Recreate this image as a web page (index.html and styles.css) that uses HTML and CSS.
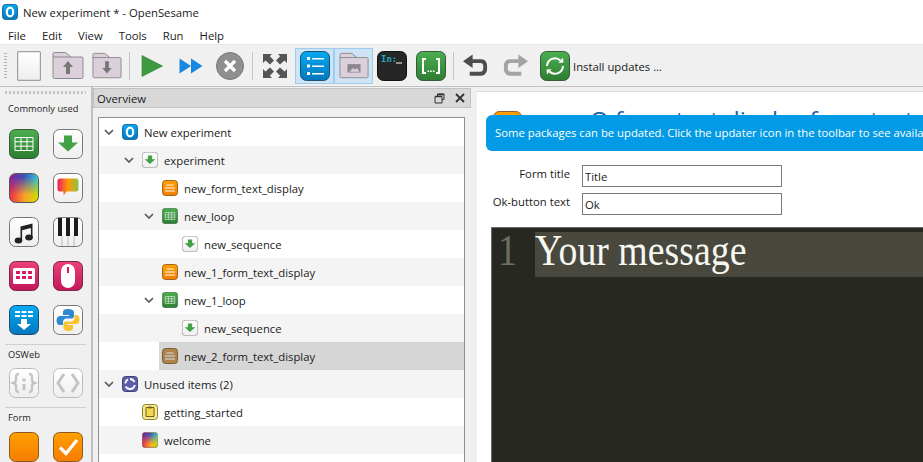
FILE: index.html
```html
<!DOCTYPE html>
<html lang="en">
<head>
<meta charset="utf-8">
<title>New experiment * - OpenSesame</title>
<link rel="stylesheet" href="styles.css">
</head>
<body>
<svg class="defs" width="0" height="0" aria-hidden="true">
  <defs>
    <linearGradient id="green" x1="0" y1="0" x2="0" y2="1"><stop offset="0" stop-color="#4caf50"/><stop offset="1" stop-color="#2e7d32"/></linearGradient>
    <linearGradient id="blue" x1="0" y1="0" x2="0" y2="1"><stop offset="0" stop-color="#03a9f4"/><stop offset="1" stop-color="#0277bd"/></linearGradient>
    <linearGradient id="orange" x1="0" y1="0" x2="0" y2="1"><stop offset="0" stop-color="#ffa000"/><stop offset="1" stop-color="#f57c00"/></linearGradient>
    <linearGradient id="pink" x1="0" y1="0" x2="0" y2="1"><stop offset="0" stop-color="#ec407a"/><stop offset="1" stop-color="#c2185b"/></linearGradient>
    <linearGradient id="paper" x1="0" y1="0" x2="0" y2="1"><stop offset="0" stop-color="#ffffff"/><stop offset="1" stop-color="#eeeeee"/></linearGradient>
    <linearGradient id="rb-top" x1="0" y1="0" x2="1" y2="0"><stop offset="0" stop-color="#7b1fa2"/><stop offset=".5" stop-color="#3f51b5"/><stop offset="1" stop-color="#29c6e6"/></linearGradient>
    <linearGradient id="rb-bot" x1="0" y1="0" x2="1" y2="0"><stop offset="0" stop-color="#ef2b45"/><stop offset=".55" stop-color="#f9a825"/><stop offset="1" stop-color="#c6e000"/></linearGradient>
    <linearGradient id="rb-fade" x1="0" y1="0" x2="0" y2="1"><stop offset=".1" stop-color="#fff"/><stop offset=".75" stop-color="#000"/></linearGradient>
    <mask id="rb-mask" maskContentUnits="objectBoundingBox"><rect width="1" height="1" fill="url(#rb-fade)"/></mask>
    <linearGradient id="rb3" x1="0" y1="0" x2="1" y2="0"><stop offset="0" stop-color="#e91e63"/><stop offset=".5" stop-color="#ff9800"/><stop offset="1" stop-color="#8bc34a"/></linearGradient>
    <symbol id="i-loop" viewBox="0 0 30 30"><rect x=".5" y=".5" width="29" height="29" rx="6" fill="url(#green)" stroke="#33593a"/><path d="M6 8.500h18v13H6zM6 12.800h18M6 17.200h18M12 8.500v13M18 8.500v13" fill="none" stroke="#fff" stroke-width="1"/></symbol>
    <symbol id="i-seq" viewBox="0 0 30 30"><rect x=".5" y=".5" width="29" height="29" rx="6" fill="url(#paper)" stroke="#777"/><path d="M11 6.500h8v7h6l-10 9-10-9h6z" fill="#43a047"/></symbol>
    <symbol id="i-rainbow" viewBox="0 0 30 30"><rect x=".5" y=".5" width="29" height="29" rx="6" fill="url(#rb-bot)" stroke="#555"/><rect x="1" y="1" width="28" height="28" rx="6" fill="url(#rb-top)" mask="url(#rb-mask)"/></symbol>
    <symbol id="i-feedback" viewBox="0 0 30 30"><rect x=".5" y=".5" width="29" height="29" rx="6" fill="url(#paper)" stroke="#777"/><path d="M7 5.500h16a2.500 2.500 0 0 1 2.500 2.500v8a2.500 2.500 0 0 1-2.500 2.500h-9.500l-3 4v-4H7A2.500 2.500 0 0 1 4.500 16V8A2.500 2.500 0 0 1 7 5.500z" fill="url(#rb3)"/></symbol>
    <symbol id="i-music" viewBox="0 0 30 30"><rect x=".5" y=".5" width="29" height="29" rx="6" fill="url(#paper)" stroke="#777"/><path d="M11.500 9.500l12-3v15h-1.600V11l-8.800 2.200V24h-1.600z" fill="#222"/><ellipse cx="9.500" cy="23.500" rx="3.800" ry="3" fill="#222"/><ellipse cx="20" cy="20.500" rx="3.800" ry="3" fill="#222"/></symbol>
    <symbol id="i-piano" viewBox="0 0 30 30"><rect x=".5" y=".5" width="29" height="29" rx="6" fill="url(#paper)" stroke="#777"/><path d="M9 19v10M15 19v10M21 19v10" stroke="#bbb"/><path d="M5 1h4v18H5zM13 1h4v18h-4zM21 1h4v18h-4z" fill="#1c1c1c"/></symbol>
    <symbol id="i-keyboard" viewBox="0 0 30 30"><rect x=".5" y=".5" width="29" height="29" rx="6" fill="url(#pink)" stroke="#7a2945"/><path d="M4 8.500a1.500 1.500 0 0 1 1.500-1.500h19a1.500 1.500 0 0 1 1.500 1.500v13a1.500 1.500 0 0 1-1.500 1.500h-19A1.500 1.500 0 0 1 4 21.500z" fill="#fff"/><path d="M7 10h4v3H7zM13 10h4v3h-4zM19 10h4v3h-4zM7 15h4v3H7zM13 15h4v3h-4zM19 15h4v3h-4z" fill="#d81b60"/></symbol>
    <symbol id="i-mouse" viewBox="0 0 30 30"><rect x=".5" y=".5" width="29" height="29" rx="6" fill="url(#pink)" stroke="#7a2945"/><rect x="8" y="3" width="14" height="24" rx="7" fill="#fff"/><path d="M15 6v6" stroke="#d81b60" stroke-width="2"/></symbol>
    <symbol id="i-logger" viewBox="0 0 30 30"><rect x=".5" y=".5" width="29" height="29" rx="6" fill="url(#blue)" stroke="#1d4f6e"/><path d="M6 6h5v2H6zM12.500 6h5v2h-5zM19 6h5v2h-5zM6 10h5v2H6zM12.500 10h5v2h-5zM19 10h5v2h-5zM12 14h6v5h4l-7 6-7-6h4z" fill="#fff"/></symbol>
    <symbol id="i-python" viewBox="0 0 30 30"><rect x=".5" y=".5" width="29" height="29" rx="6" fill="url(#paper)" stroke="#777"/><path d="M15 4c-4 0-5 1.500-5 3.500V10h6v1H7c-2 0-3.500 1.500-3.500 4.500S5 20 7 20h3v-3c0-2 1.500-3.500 3.500-3.500h5c1.500 0 2.500-1 2.500-2.500V7.500C21 5.500 19 4 15 4z" fill="#2f89d0"/><path d="M15 26c4 0 5-1.500 5-3.500V20h-6v-1h9c2 0 3.500-1.500 3.500-4.500S25 10 23 10h-1.500v3c0 2-1.500 3.500-3.500 3.500h-5c-1.500 0-2.500 1-2.500 2.500v3.500c0 2 1.500 3.500 4.500 3.500z" fill="#f9c22e"/></symbol>
    <symbol id="i-js" viewBox="0 0 30 30"><rect x=".5" y=".5" width="29" height="29" rx="6" fill="url(#paper)" stroke="#bbb"/><path d="M10 6c-3 0-3 1.500-3 3.500V12c0 2-1 2.500-2.500 3C6 15.500 7 16 7 18v2.500C7 22.500 7 24 10 24M20 6c3 0 3 1.500 3 3.500V12c0 2 1 2.500 2.500 3-1.500.5-2.500 1-2.500 3v2.500c0 2 0 3.500-3 3.500" fill="none" stroke="#c4c4c4" stroke-width="2.400"/><path d="M13.500 10.500h3v3h-3zM13.500 16h3v6h-3z" fill="#c4c4c4"/></symbol>
    <symbol id="i-html" viewBox="0 0 30 30"><rect x=".5" y=".5" width="29" height="29" rx="6" fill="url(#paper)" stroke="#bbb"/><path d="M11 6l-6 9 6 9M19 6l6 9-6 9" fill="none" stroke="#c4c4c4" stroke-width="3"/></symbol>
    <symbol id="i-form" viewBox="0 0 30 30"><rect x=".5" y=".5" width="29" height="29" rx="6" fill="url(#orange)" stroke="#8a5a1c"/></symbol>
    <symbol id="i-form-check" viewBox="0 0 30 30"><rect x=".5" y=".5" width="29" height="29" rx="6" fill="url(#orange)" stroke="#8a5a1c"/><path d="M7 15.500l6 6L24 8" fill="none" stroke="#fff" stroke-width="3.200"/></symbol>
    <symbol id="i-form-text" viewBox="0 0 16 16"><rect x=".5" y=".5" width="15" height="15" rx="3" fill="url(#orange)" stroke="#a0651a"/><path d="M4.500 5h7M3 8h10M3 11h10" stroke="#fff"/></symbol>
    <symbol id="i-form-sel" viewBox="0 0 16 16"><rect x=".5" y=".5" width="15" height="15" rx="3" fill="#ad8347" stroke="#7c5f35"/><path d="M4.500 5h7M3 8h10M3 11h10" stroke="#cfe3f2"/></symbol>
    <symbol id="i-app" viewBox="0 0 16 16"><rect x=".5" y=".5" width="15" height="15" rx="3" fill="url(#blue)" stroke="#1d6c9c"/><ellipse cx="8" cy="8" rx="3.200" ry="4.300" fill="none" stroke="#fff" stroke-width="2.200"/></symbol>
    <symbol id="i-unused" viewBox="0 0 16 16"><rect x=".5" y=".5" width="15" height="15" rx="3" fill="#5c5fa8" stroke="#3f4178"/><path d="M8 3a5 5 0 0 1 4.500 3M12.800 9A5 5 0 0 1 8 13a5 5 0 0 1-4.300-2.500M3.300 7.500A5 5 0 0 1 6 3.400" fill="none" stroke="#fff" stroke-width="1.800"/></symbol>
    <symbol id="i-note" viewBox="0 0 16 16"><rect x=".5" y=".5" width="15" height="15" rx="3" fill="#f7e98a" stroke="#8c8236"/><path d="M4 3.500h8v9H4z" fill="#f3d94e" stroke="#6b6325"/><path d="M6.500 2.500h3v2h-3z" fill="#6b6325"/></symbol>
    <symbol id="i-folder" viewBox="0 0 32 30"><path d="M1 26V3a1.500 1.500 0 0 1 1.500-1.500h11L19 6h11a1.500 1.500 0 0 1 1 1v19a1.500 1.500 0 0 1-1.500 1.500h-27A1.500 1.500 0 0 1 1 26z" fill="#dccfdc" stroke="#8d8a8d"/><path d="M1 6h18" stroke="#8d8a8d"/></symbol>
    <symbol id="i-chev" viewBox="0 0 10 6"><path d="M1 1l4 4 4-4" fill="none" stroke="#5a5a5a" stroke-width="1.700"/></symbol>
  </defs>
</svg>

<div class="app">
  <header class="titlebar">
    <svg class="title-icon"><use href="#i-app"/></svg>
    <span>New experiment * - OpenSesame</span>
  </header>
  <nav class="menubar">
    <span>File</span><span>Edit</span><span>View</span><span>Tools</span><span>Run</span><span>Help</span>
  </nav>

  <div class="toolbar">
    <span class="grip"></span>
    <svg class="tb doc" viewBox="0 0 24 30"><rect x=".6" y=".6" width="22.800" height="28.800" fill="url(#paper)" stroke="#a0a0a0" stroke-width="1.200" rx="1"/></svg>
    <svg class="tb fup" viewBox="0 0 32 30"><use href="#i-folder"/><path d="M16 10l5 6h-3v7h-4v-7h-3z" fill="#777"/></svg>
    <svg class="tb fdown" viewBox="0 0 32 30"><use href="#i-folder"/><path d="M16 23l5-6h-3v-7h-4v7h-3z" fill="#777"/></svg>
    <span class="sep"></span>
    <svg class="tb play" viewBox="0 0 22 22"><path d="M1 .5L21.500 11 1 21.500z" fill="#3d9a40" stroke="#2e7d32" stroke-width=".6"/></svg>
    <svg class="tb ff" viewBox="0 0 24 16"><path d="M.5 .5L12 8 .5 15.500zM12 .5L23.500 8 12 15.500z" fill="#1787e0"/></svg>
    <svg class="tb stop" viewBox="0 0 28 28"><circle cx="14" cy="14" r="13.500" fill="#8f8f8f" stroke="#777"/><path d="M9 9l10 10M19 9L9 19" stroke="#fff" stroke-width="3.200"/></svg>
    <span class="sep"></span>
    <svg class="tb expand" viewBox="0 0 26 26"><g fill="#555"><path d="M1 1h9L7.800 3.200 12 7.500 8 11.500 3.500 7.400 1 10z"/><path d="M25 1v9l-2.500-2.600L18 11.500l-4-4 4.200-4.300L16 1z"/><path d="M1 25v-9l2.500 2.600L8 14.500l4 4-4.200 4.300L10 25z"/><path d="M25 25h-9l2.200-2.200-4.200-4.300 4-4 4.500 4.100L25 16z"/></g></svg>
    <span class="toggle">
      <svg class="tb tico" viewBox="0 0 30 30"><rect x=".5" y=".5" width="29" height="29" rx="6" fill="url(#blue)" stroke="#1d4f6e"/><path d="M7 6h3v3H7zM7 13.500h3v3H7zM7 21h3v3H7zM12 7h12v1.600H12zM12 14.500h12v1.600H12zM12 22h12v1.600H12z" fill="#fff"/></svg>
    </span>
    <span class="toggle last">
      <svg class="tb tico" viewBox="0 0 32 30"><use href="#i-folder"/><path d="M9 22V13h14v9z" fill="#8b878b"/><path d="M11 21l4-4 2 2 2-2 3 4z" fill="#dccfdc"/></svg>
    </span>
    <svg class="tb ipy-btn" viewBox="0 0 30 30"><rect x=".5" y=".5" width="29" height="29" rx="6" fill="#262626" stroke="#111"/><text x="4" y="11" class="ipy">In:</text><path d="M19 12h6" stroke="#fff"/></svg>
    <svg class="tb tmpl" viewBox="0 0 30 30"><rect x=".5" y=".5" width="29" height="29" rx="6" fill="url(#green)" stroke="#33593a"/><path d="M10 8H7v14h3M20 8h3v14h-3" fill="none" stroke="#fff" stroke-width="2"/><path d="M11.500 19.500h1.600v1.600h-1.600zM14.200 19.500h1.600v1.600h-1.600zM16.900 19.500h1.600v1.600h-1.600z" fill="#fff"/></svg>
    <span class="sep"></span>
    <svg class="tb undo" viewBox="0 0 28 28"><path d="M1 9L11 2v5h9c4 0 6 3 6 7v3c0 4-3 7-6 7H8v-4h11c2 0 3-2 3-3v-3c0-2-1-3-3-3h-8v5z" fill="#4d4d4d"/></svg>
    <svg class="tb redo" viewBox="0 0 28 28"><path d="M27 9L17 2v5H8c-4 0-6 3-6 7v3c0 4 3 7 6 7h12v-4H9c-2 0-3-2-3-3v-3c0-2 1-3 3-3h8v5z" fill="#a3a3a3"/></svg>
    <svg class="tb upd" viewBox="0 0 30 30"><rect x=".5" y=".5" width="29" height="29" rx="6" fill="url(#green)" stroke="#33593a"/><path d="M7 15a8 8 0 0 1 13.500-5.500M23 15a8 8 0 0 1-13.500 5.500" fill="none" stroke="#fff" stroke-width="2"/><path d="M18.500 12l5-.5-.5-5zM11.500 18l-5 .5.5 5z" fill="#fff"/></svg>
    <span class="tb-label">Install updates ...</span>
  </div>

  <div class="workspace">
    <aside class="palette">
      <div class="grip-h"></div>
      <h2 class="pal-title">Commonly used</h2>
      <div class="pal-grid">
        <svg class="pi"><use href="#i-loop"/></svg><svg class="pi"><use href="#i-seq"/></svg>
        <svg class="pi"><use href="#i-rainbow"/></svg><svg class="pi"><use href="#i-feedback"/></svg>
        <svg class="pi"><use href="#i-music"/></svg><svg class="pi"><use href="#i-piano"/></svg>
        <svg class="pi"><use href="#i-keyboard"/></svg><svg class="pi"><use href="#i-mouse"/></svg>
        <svg class="pi"><use href="#i-logger"/></svg><svg class="pi"><use href="#i-python"/></svg>
      </div>
      <hr class="pal-rule">
      <h2 class="pal-title sub">OSWeb</h2>
      <div class="pal-grid">
        <svg class="pi"><use href="#i-js"/></svg><svg class="pi"><use href="#i-html"/></svg>
      </div>
      <hr class="pal-rule">
      <h2 class="pal-title sub">Form</h2>
      <div class="pal-grid">
        <svg class="pi"><use href="#i-form"/></svg><svg class="pi"><use href="#i-form-check"/></svg>
      </div>
    </aside>

    <section class="overview">
      <div class="dock-head">
        <span>Overview</span>
        <span class="dock-btns">
          <svg width="11" height="11" viewBox="0 0 11 11"><path d="M3.500 3V1h6.500v5.500H8M1 3.500h7V10H1z" fill="none" stroke="#333"/><path d="M1 3.500h7M3.500 1.500h6.500" stroke="#333" stroke-width="1.600"/></svg>
          <svg width="10" height="10" viewBox="0 0 10 10"><path d="M1 1l8 8M9 1L1 9" stroke="#333" stroke-width="1.800"/></svg>
        </span>
      </div>
      <div class="tree">
        <div class="row"><svg class="chev l0"><use href="#i-chev"/></svg><svg class="ti"><use href="#i-app"/></svg>New experiment</div>
        <div class="row alt"><svg class="chev l1"><use href="#i-chev"/></svg><svg class="ti"><use href="#i-seq"/></svg>experiment</div>
        <div class="row in2"><svg class="ti"><use href="#i-form-text"/></svg>new_form_text_display</div>
        <div class="row alt"><svg class="chev l2"><use href="#i-chev"/></svg><svg class="ti"><use href="#i-loop"/></svg>new_loop</div>
        <div class="row in3"><svg class="ti"><use href="#i-seq"/></svg>new_sequence</div>
        <div class="row alt in2"><svg class="ti"><use href="#i-form-text"/></svg>new_1_form_text_display</div>
        <div class="row"><svg class="chev l2"><use href="#i-chev"/></svg><svg class="ti"><use href="#i-loop"/></svg>new_1_loop</div>
        <div class="row alt in3"><svg class="ti"><use href="#i-seq"/></svg>new_sequence</div>
        <div class="row selected"><span class="sel-fill"><svg class="ti"><use href="#i-form-sel"/></svg>new_2_form_text_display</span></div>
        <div class="row alt"><svg class="chev l0"><use href="#i-chev"/></svg><svg class="ti"><use href="#i-unused"/></svg>Unused items (2)</div>
        <div class="row in1"><svg class="ti"><use href="#i-note"/></svg>getting_started</div>
        <div class="row alt in1"><svg class="ti"><use href="#i-rainbow"/></svg>welcome</div>
        <div class="row"></div>
      </div>
    </section>

    <main class="editor">
      <div class="ed-head">
        <svg class="ed-icon"><use href="#i-form"/></svg>
        <span class="ed-title">Q form text display form text</span>
      </div>
      <div class="notice">Some packages can be updated. Click the updater icon in the toolbar to see available updates</div>
      <form class="fields">
        <label class="field"><span class="f-label">Form title</span><input class="f-input" value="Title"></label>
        <label class="field"><span class="f-label">Ok-button text</span><input class="f-input" value="Ok"></label>
      </form>
      <div class="code">
        <div class="code-line"><span class="gutter"><span class="glyphs">1</span></span><span class="code-text"><span class="glyphs">Your message</span></span></div>
      </div>
    </main>
  </div>
</div>
</body>
</html>
```

FILE: styles.css
```css
* { box-sizing: border-box; }
html, body { margin: 0; height: 100%; }
body { font-family: "Open Sans", "Noto Sans", sans-serif; font-size: 11.300px; color: #1a1a1a; background: #f0f0f0; overflow: hidden; }
.defs { display: block; height: 0; }
.app { width: 923px; height: 462px; display: flex; flex-direction: column; overflow: hidden; }

.titlebar { height: 24px; background: #fff; display: flex; align-items: center; gap: 5px; padding-left: 2px; }
.title-icon { width: 16px; height: 16px; }
.menubar { height: 20px; padding: 2px 0 0 8px; background: #fff; display: flex; align-items: center; gap: 16px; }

.toolbar { height: 43px; background: #f0f0f0; border-top: 1px solid #e4e4e4; border-bottom: 1px solid #c0c0c0; display: flex; align-items: center; padding: 1px 0 0 4px; }
.grip { width: 3px; height: 26px; margin-right: 10px; background: repeating-linear-gradient(#b5b5b5 0 1px, transparent 1px 3px); }
.tb { display: block; flex: none; height: 30px; }
.doc { width: 24px; margin-right: 11px; }
.fup { width: 32px; margin-right: 8px; }
.fdown { width: 30px; margin-right: 7px; }
.sep { width: 1px; height: 28px; background: #c4c4c4; flex: none; margin-right: 11px; }
.play { width: 22px; margin-right: 16px; }
.ff { width: 24px; margin-right: 13px; }
.stop { width: 28px; margin-right: 8px; }
.stop + .sep { margin-right: 9px; }
.expand { width: 26px; margin-right: 7px; }
.toggle { display: flex; align-items: center; width: 39px; height: 36px; padding-left: 4px; background: #cde4f7; border: 1px solid #9fcbee; flex: none; }
.toggle.last { margin-right: 4px; }
.tico { width: 30px; }
.ipy-btn { width: 30px; margin-right: 9px; }
.tmpl { width: 30px; margin-right: 7px; }
.tmpl + .sep { margin-right: 8px; }
.undo { width: 27px; margin-right: 13px; }
.redo { width: 27px; margin-right: 11px; }
.upd { width: 30px; margin-right: 3px; }
.ipy { font-family: "DejaVu Sans Mono", monospace; font-size: 9px; font-weight: 700; fill: #1fa8c9; }

.workspace { flex: 1; display: flex; min-height: 0; }

.palette { width: 93px; flex: none; border-right: 2px solid #c0c0c0; padding: 4px 5px 0; }
.grip-h { height: 3px; background: repeating-linear-gradient(90deg, #c4c4c4 0 2px, transparent 2px 4px); }
.pal-title { margin: 8px 0 13px 3px; font-size: 9.300px; font-weight: 400; line-height: 14px; color: #1c1c1c; white-space: nowrap; }
.pal-title.sub { margin: 3px 0 6px 3px; }
.pal-title.sub:nth-of-type(3) { margin-bottom: 7px; }
.pal-grid { display: grid; grid-template-columns: 30px 30px; column-gap: 14px; row-gap: 14px; padding-left: 4px; }
.pi { width: 30px; height: 30px; display: block; }
.pal-rule { border: 0; border-top: 1px solid #cfcfcf; margin: 9px 0 0; }

.overview { width: 378px; flex: none; padding-top: 1px; }
.dock-head { height: 20px; background: #d8d8d8; border: 1px solid #c2c2c2; display: flex; align-items: center; justify-content: space-between; padding: 0 5px 0 3px; }
.dock-btns { display: flex; gap: 10px; align-items: center; }
.tree { margin: 9px 6px 0 5px; height: 400px; background: #fff; border: 1px solid #8f8f8f; border-bottom: 0; }
.row { height: 28px; display: flex; align-items: center; white-space: nowrap; }
.row.alt { background: #f4f4f4; }
.ti { width: 16px; height: 16px; flex: none; margin-right: 6px; }
.chev { width: 10px; height: 6px; flex: none; margin-right: 8px; }
.l0 { margin-left: 5px; }
.l1 { margin-left: 25px; }
.l2 { margin-left: 45px; }
.in1 { padding-left: 43px; }
.in2 { padding-left: 63px; }
.in3 { padding-left: 83px; }
.row.selected { padding-left: 60px; }
.sel-fill { display: flex; align-items: center; height: 28px; flex: 1; background: #d6d6d6; padding-left: 3px; }

.editor { flex: 1; min-width: 0; margin: 4px 0 0 6px; background: #fff; border-top: 1px solid #dcdcdc; position: relative; overflow: hidden; padding-left: 14px; }
.ed-head { height: 73px; display: flex; gap: 68px; padding: 19px 0 0 2px; }
.ed-icon { width: 29px; height: 29px; }
.ed-title { font-size: 24px; line-height: 24px; height: 24px; margin-top: -3px; white-space: nowrap; color: #1e5fa8; }
.notice { position: absolute; left: 9px; top: 23px; width: 440px; height: 36px; background: #039be5; color: #fff; border-radius: 6px 0 0 6px; padding-left: 9px; line-height: 35px; white-space: nowrap; overflow: hidden; }
.fields { display: flex; flex-direction: column; gap: 6px; }
.field { display: flex; align-items: center; gap: 12px; height: 22px; }
.f-label { width: 79px; text-align: right; line-height: 16px; margin-top: -4px; white-space: nowrap; }
.f-input { width: 200px; height: 22px; border: 1px solid #7a7a7a; background: #fff; font: inherit; padding: 1px 2px 0; color: #1a1a1a; border-radius: 0; }
.code { height: 240px; margin-top: 12px; background: #272822; border-top: 1px solid #6b6b6b; border-left: 1px solid #6b6b6b; padding-top: 4px; }
.code-line { display: flex; height: 45px; font-family: "Liberation Serif", "DejaVu Serif", serif; font-size: 45px; line-height: 45px; }
.gutter { width: 43px; color: #6d6e62; padding-left: 6px; flex: none; }
.code-text { flex: 1; background: #49483e; color: #f8f8f2; white-space: nowrap; }
.glyphs { display: inline-block; transform: translateY(-4px) scaleX(.84); transform-origin: left center; }
```
